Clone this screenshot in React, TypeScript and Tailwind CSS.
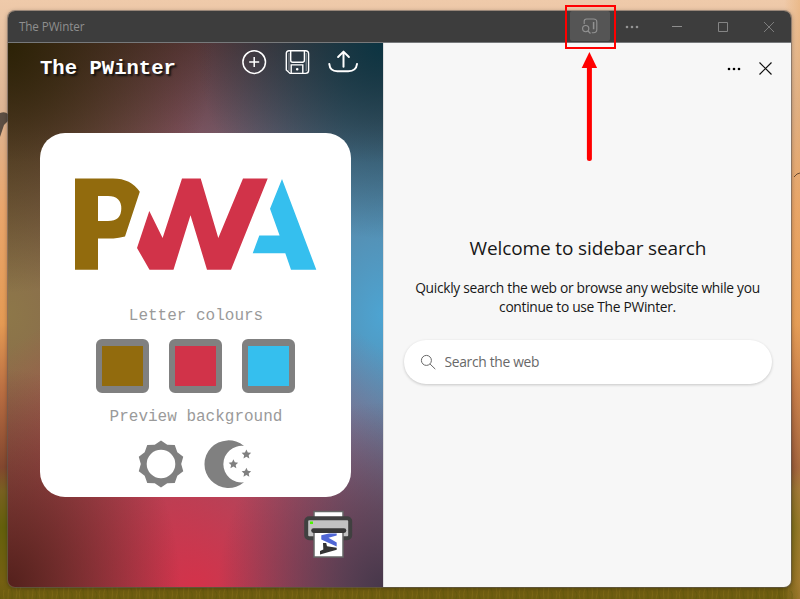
import React from "react";

const starPoints = (cx: number, cy: number, r: number) =>
  Array.from({ length: 10 }, (_, i) => {
    const a = (Math.PI * i) / 5;
    const d = i % 2 ? r * 0.48 : r;
    return `${(cx + d * Math.sin(a)).toFixed(2)},${(cy - d * Math.cos(a)).toFixed(2)}`;
  }).join(" ");

const sunPath =
  "M" +
  Array.from({ length: 20 }, (_, i) => {
    const a = (Math.PI * i) / 10;
    const d = i % 2 ? 20.2 : 23.4;
    return `${(24 + d * Math.sin(a)).toFixed(2)} ${(24 - d * Math.cos(a)).toFixed(2)}`;
  }).join("L") +
  "ZM24 9.7a14.3 14.3 0 1 0 0 28.6a14.3 14.3 0 1 0 0-28.6Z";

function TitleBar() {
  return (
    <header className="flex h-8 shrink-0 items-center border-b border-[#77797b] bg-[#3d3d3d] pl-[11px] text-[#8f8f8f]">
      <span className="font-['Open_Sans','Noto_Sans',sans-serif] text-[11.7px] tracking-[-0.12px]">The PWinter</span>
      <div className="ml-auto flex h-full items-center">
        <button className="flex h-[30px] w-10 items-center justify-center self-start rounded-[2px] bg-[#555]">
          <svg width="18" height="18" viewBox="0 0 18 18" fill="none" stroke="#929292" strokeWidth="1.15">
            <path d="M3.2 7V4.2Q3.2 2 5.5 2H12.5Q15.8 2 15.8 5V12.5Q15.8 15.7 12.5 15.7H10.8" />
            <path d="M12.6 5v7.3" strokeWidth="1.5" />
            <circle cx="4.7" cy="11.6" r="3.1" />
            <path d="m7 14 2.5 2.5" />
          </svg>
        </button>
        <button className="flex w-[44px] justify-center pr-px">
          <svg width="14" height="4" viewBox="0 0 14 4" fill="#949494">
            <circle cx="2" cy="2" r="1.3" /><circle cx="7" cy="2" r="1.3" /><circle cx="12" cy="2" r="1.3" />
          </svg>
        </button>
        <button className="flex w-[46px] justify-center">
          <svg width="10" height="10" viewBox="0 0 10 10"><path d="M0 4.5h10" stroke="#8e8e8e" /></svg>
        </button>
        <button className="flex w-[46px] justify-center">
          <svg width="10" height="10" viewBox="0 0 10 10"><path d="M.5.5h9v9h-9z" fill="none" stroke="#858585" /></svg>
        </button>
        <button className="flex w-[45px] justify-center">
          <svg width="10" height="10" viewBox="0 0 10 10"><path d="m0 0 10 10M10 0 0 10" stroke="#7d7d7d" /></svg>
        </button>
      </div>
    </header>
  );
}

function Toolbar() {
  return (
    <div className="flex h-[40px] pl-8">
      <h1 className="w-[201px] pt-[14px] font-['Liberation_Mono',monospace] text-[20.6px] leading-6 font-bold text-white [text-shadow:2px_2px_2px_#111]">
        The PWinter
      </h1>
      <div className="flex pt-[6px] text-white">
        <svg width="26" height="26" viewBox="0 0 26 26" fill="none" stroke="currentColor" strokeWidth="1.5">
          <circle cx="13.2" cy="13.1" r="11.3" /><path d="M8.2 13.1h10M13.2 8.1v10" />
        </svg>
        <svg className="ml-[17px]" width="26" height="26" viewBox="0 0 26 26" fill="none" stroke="currentColor" strokeWidth="1.4">
          <path d="M5 1.8h16.4q3.2 0 3.2 3v16.8q0 2.8-3 2.8H6L2.3 21V4.5q0-2.7 2.7-2.7Z" />
          <path d="M6.7 2v9.3q0 2 2 2h9.7q2 0 2-2V2M7.2 24v-8.1h11.6V24" />
          <path d="M5 4v18M22.2 4v18" strokeWidth="0.8" opacity="0.6" />
          <circle cx="13.2" cy="20.2" r=".6" />
        </svg>
        <svg className="ml-[17px]" width="32" height="26" viewBox="0 0 32 26" fill="none" stroke="currentColor" strokeWidth="2" strokeLinecap="round" strokeLinejoin="round">
          <path d="M2.3 15q.6 7.2 8 7.2h11q7.8 0 8.7-7.2M16.5 17.8V3M11.1 8l5.4-5.4L21.9 8" />
        </svg>
      </div>
    </div>
  );
}

function Logo() {
  return (
    <svg className="mt-[44px]" width="244" height="94" viewBox="74 177 244 94">
      <path fill="#926b0d" fillRule="evenodd" d="M75 178.4H113Q131 178.4 139.8 191.8L125 236.6Q118.5 238.4 113.5 238.4H98V269.7H75ZM98 196V221H108Q121.3 221 121.3 208.5Q121.3 196 108 196Z" />
      <path fill="#d13349" d="m149.3 211 13.3 27L182 178.4h18.7L218.3 238 243 178.4h24.7L231 269.7h-24l-16.5-54.5-17 54.5h-24L137 248Z" />
      <path fill="#35bfee" d="m282 179 34.3 90.7H291l-5.7-16.5h-32.6l6.6-17.6h20.3L270 208.7Z" />
    </svg>
  );
}

function LogoCard() {
  return (
    <main className="mt-[50px] ml-8 flex h-[364px] w-[311px] flex-col items-center rounded-[25px] bg-white font-['Liberation_Mono',monospace] text-base leading-5 text-[#9a9a9a]">
      <Logo />
      <p className="mt-[35px] ml-px">Letter colours</p>
      <div className="mt-[13px] flex gap-[20px]">
        <button className="h-[54px] w-[53px] rounded-[6px] border-x-[6px] border-y-[7px] border-[#808080] bg-[#926b0d]" />
        <button className="h-[54px] w-[53px] rounded-[6px] border-x-[6px] border-y-[7px] border-[#808080] bg-[#d13349]" />
        <button className="h-[54px] w-[53px] rounded-[6px] border-x-[6px] border-y-[7px] border-[#808080] bg-[#35bfee]" />
      </div>
      <p className="mt-[14px] ml-px">Preview background</p>
      <div className="mt-[13px] mr-[2px] flex gap-[19px] text-[#808080]">
        <svg width="48" height="48" viewBox="0 0 48 48" fill="currentColor"><path d={sunPath} fillRule="evenodd" /></svg>
        <svg width="48" height="48" viewBox="0 0 48 48" fill="currentColor">
          <path d="M40 6A24 23.8 0 1 0 40 42.3A18.3 18.3 0 1 1 40 6Z" />
          <polygon points={starPoints(42.4, 14.4, 5)} />
          <polygon points={starPoints(29.4, 24.2, 5)} />
          <polygon points={starPoints(42.4, 32.7, 5)} />
        </svg>
      </div>
    </main>
  );
}

function Printer() {
  return (
    <svg className="mt-[13px] mr-[30px] self-end" width="50" height="49" viewBox="0 0 50 49">
      <path d="M11 1.5h29v10H11z" fill="#fff" stroke="#666" strokeWidth="1.5" />
      <rect x="3.2" y="8.3" width="44" height="20" rx="3" fill="#c2c2c2" stroke="#404040" strokeWidth="4" />
      <path d="M11 21h29v26H11z" fill="#fff" stroke="#666" strokeWidth="1.5" />
      <path d="M10.5 20.6H41" stroke="#383838" strokeWidth="4.6" strokeLinecap="round" />
      <path d="M7 11.5h3v2.5H7z" fill="#4cf500" />
      <path d="M18.3 25.3 26 23.4h7.7v2.2l-8.2 2.2 8.2 4.6v4L18.3 29.6Z" fill="#5067d5" />
      <path d="M17 44.6V41l3.3-1.5-.3-6.5h3.2l.8 3.3 9.7 1.5v2Z" fill="#343434" />
    </svg>
  );
}

function SearchSidebar() {
  return (
    <aside className="flex flex-1 flex-col items-center border-l border-[#dedede] bg-[#f7f7f7] font-['Open_Sans','Noto_Sans',sans-serif] text-[#171717]">
      <div className="flex h-[51px] w-full items-center justify-end gap-[18px] pr-[19px]">
        <svg width="14" height="4" viewBox="0 0 14 4"><circle cx="2" cy="2" r="1.3" /><circle cx="7" cy="2" r="1.3" /><circle cx="12" cy="2" r="1.3" /></svg>
        <svg width="13" height="13" viewBox="0 0 13 13"><path d="m.5.5 12 12m0-12-12 12" stroke="#111" strokeWidth="1.2" /></svg>
      </div>
      <h2 className="mt-[140px] w-[236px] text-[19px] leading-7 whitespace-nowrap tracking-[-0.12px]">Welcome to sidebar search</h2>
      <p className="mt-4 text-center text-[13.8px] leading-[19px] whitespace-nowrap tracking-[-0.31px]">
        Quickly search the web or browse any website while you<br />continue to use The PWinter.
      </p>
      <div className="mt-[24px] flex h-11 w-[368px] items-center rounded-full bg-white pl-4 shadow-[0_1px_3px_#0003]">
        <svg width="16" height="16" viewBox="0 0 16 16" fill="none" stroke="#686868"><circle cx="6.4" cy="6.4" r="5" /><path d="m10.1 10.1 5.2 5" /></svg>
        <input aria-label="Search the web" placeholder="Search the web" className="ml-[9px] w-72 bg-transparent text-[13.8px] tracking-[-0.3px] outline-none placeholder:text-[#686868]" />
      </div>
    </aside>
  );
}

export default function App() {
  return (
    <div className="relative h-[599px] w-[800px] overflow-hidden bg-[linear-gradient(90deg,transparent_98%,#e5a25b66_100%),linear-gradient(180deg,#efcaaa_0,#ddb594_18%,#eaa66c_35%,#e49a54_54%,#b76c41_66%,#82472f_78%,#786020_82%,#64600b_88%,#756012_97%,#6c5c10_100%)] pt-[11px] pl-2">
      <svg className="absolute inset-0" width="800" height="599" fill="none">
        <path d="M0 113q5-2 8 1v7l-4 4-4 12Z" fill="#5c4e43" />
        <path d="M794 177q3-4 6-4" stroke="#6c4c32" />
        {Array.from({ length: 200 }, (_, i) => (
          <path key={i} d={`M${i * 4} 599q${(i % 5) - 2}-6 ${(i % 3) - 1}-${8 + (i * 7) % 6}`} stroke={i % 3 ? "#91781d" : "#5b5709"} opacity="0.4" />
        ))}
      </svg>
      <div className="relative flex h-[576px] w-[783px] flex-col overflow-hidden rounded-[7px] shadow-[0_0_0_1px_#65606088,0_1px_5px_#0006]">
        <TitleBar />
        <div className="flex flex-1">
          <section className="flex w-[375px] flex-col bg-[radial-gradient(ellipse_55%_46%_at_0_0,#2c2206_0%,#2c220600_100%),radial-gradient(ellipse_50%_36%_at_100%_0,#0b3442_0%,#0b344200_100%),radial-gradient(ellipse_46%_40%_at_0_100%,#54201c_0%,#54201c00_100%),radial-gradient(ellipse_44%_34%_at_100%_100%,#47374a_0%,#47374a00_100%),linear-gradient(180deg,#4c2e2dcc_0%,#4c2e2d00_22%),radial-gradient(ellipse_80%_56%_at_50%_100%,#d4324a_0%,#d4324a00_100%),radial-gradient(ellipse_36%_36%_at_100%_50%,#4da4d2_0%,#4da4d200_100%),radial-gradient(ellipse_40%_36%_at_0%_50%,#8d7749_0%,#8d774900_100%),linear-gradient(90deg,#84604a,#8a5866_45%,#5e7890_90%)]">
            <Toolbar />
            <LogoCard />
            <Printer />
          </section>
          <SearchSidebar />
        </div>
      </div>
      <svg className="pointer-events-none absolute inset-0" width="800" height="599" fill="none">
        <path d="M566 6h49v42h-49z" stroke="#f00" strokeWidth="2" />
        <path d="M589.4 66v92.5" stroke="#f00" strokeWidth="5" strokeLinecap="round" />
        <path d="m589.4 52 7.7 16h-15.4Z" fill="#f00" />
      </svg>
    </div>
  );
}
